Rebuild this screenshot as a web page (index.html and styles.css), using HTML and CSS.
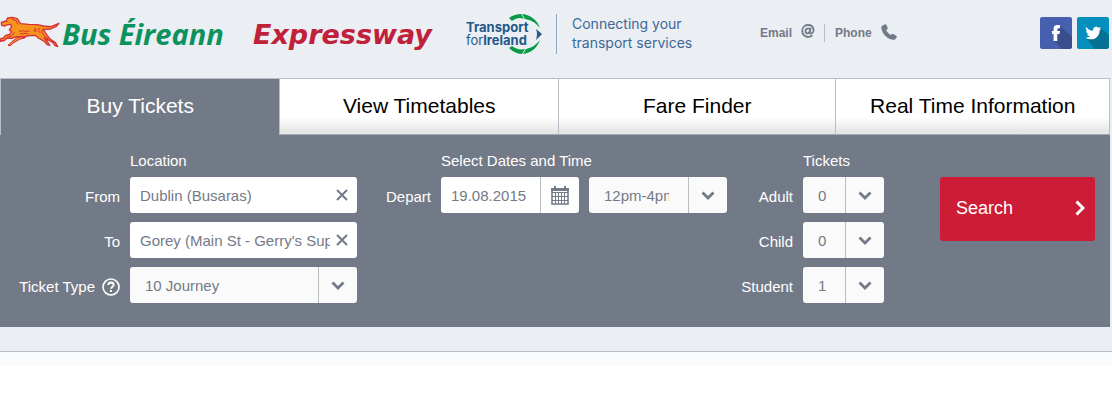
FILE: index.html
```html
<!DOCTYPE html>
<html lang="en">
<head>
<meta charset="utf-8">
<title>Bus Éireann - Buy Tickets</title>
<link rel="stylesheet" href="styles.css">
</head>
<body>
<svg class="sprite" aria-hidden="true">
  <symbol id="chevron" viewBox="0 0 14 9"><path d="M1.500 1.500 7 7l5.500-5.500" fill="none" stroke="currentColor" stroke-width="2.800"/></symbol>
  <symbol id="cross" viewBox="0 0 12 12"><path d="M1 1l10 10M11 1 1 11" fill="none" stroke="currentColor" stroke-width="2"/></symbol>
</svg>
<div class="page">
  <header class="header">
    <a class="brand" href="#" aria-label="Bus Éireann">
      <svg class="dog" viewBox="0 0 180 100" aria-hidden="true">
        <path d="M4 18 18 14 23 5 37 3 52 7 58 17 62 22 86 24 112 25 130 29 153 31 177 21 169 30 152 38 130 39 136 49 142 58 150 68 166 79 173 91 165 88 158 78 139 68 133 64 143 77 149 87 141 85 133 75 115 65 106 57 88 58 70 62 50 61 36 66 21 66 12 73 1 75 0 68 10 65 17 57 29 54 35 46 28 41 35 31 32 24 23 25 15 29 5 27Z" fill="#f7941e" stroke="#d8303a" stroke-width="4" stroke-linejoin="round"/>
        <path d="M62 61 52 64 36 76 24 87 31 88 40 80 58 69 76 64Z" fill="#f7941e" stroke="#d0203a" stroke-width="3"/>
        <path d="M36 9 49 13 53 24M57 43l7 2 7-2 8 3 10-3M60 52l8 1 8-2 9 2M103 36l6 3-8 4 9 2M119 34l-4 9 6 7M128 38l-3 9 8 12 12 9M44 48 35 59 20 62M1 74l11-2 9-6 15 0M150 68l15 11 8 12M133 66l16 21" fill="none" stroke="#d8303a" stroke-width="3"/>
        <circle cx="21" cy="15" r="2" fill="#d0203a"/>
      </svg>
      <span class="brand-name">Bus Éireann</span>
    </a>
    <a class="expressway" href="#">Expressway</a>
    <a class="tfi" href="#">
      <svg class="tfi-ring" viewBox="0 0 34 40" aria-hidden="true">
        <path d="M1 4C5 1 9 0 13 0l3 5C12 3 8 4 4 7ZM14 0c9 1 15 6 18 14C27 8 23 6 17 5ZM1 34c4 4 9 6 13 6l3-5c-5 1-9 0-13-3ZM15 40c8-1 14-6 17-14-5 6-9 8-14 9Z" fill="#079b48"/>
        <path d="M28 15 34 20 28 26Q30 20 28 15Z" fill="#25588a"/>
      </svg>
      <span class="tfi-name"><b>Transport</b><span>for<b>Ireland</b></span></span>
    </a>
    <p class="tagline">Connecting your<br>transport services</p>
    <nav class="contact" aria-label="Contact">
      <a href="#">Email
        <svg width="14" height="14" viewBox="0 0 14 14" aria-hidden="true"><path d="M9.600 3.800 8.900 8q-.2 1.800 1.100 1.600C12 9.200 12.800 7 12.500 5.200 12 2.700 9.700 1 7 1 3.500 1 1.200 3.700 1.200 7S3.600 13 7 13q2.700 0 4.500-1.600M9 6C9 4.700 8 4.200 7 4.300 5.300 4.500 4.400 6 4.500 7.600c.1 1.300 1 2 2.100 1.800C8 9.100 9 7.600 9 6Z" fill="none" stroke="currentColor" stroke-width="1.800"/></svg>
      </a>
      <a href="#">Phone
        <svg width="16" height="16" viewBox="0 0 16 16" aria-hidden="true"><path d="M1 2 4 .3Q5 0 5.500 1l1.200 3q.2.8-.5 1.300l-1 .7c.8 2 2.500 3.800 4.700 5l1.200-1q.6-.5 1.300-.1l3 2q.8.6.3 1.300l-1.500 2q-.4.500-1.200.6C6.500 15.500.5 9.500.3 3.200Q.3 2.400 1 2Z" fill="currentColor"/></svg>
      </a>
    </nav>
    <div class="social">
      <a href="#" aria-label="Facebook"><svg viewBox="0 0 32 32"><rect width="32" height="32" rx="2" fill="#465fae"/><path d="M20 9 32 20v10l-2 2H22l-8-8Z" fill="#394d8c"/><path d="M20 8v3.300h-1.700q-1 0-1 1v1.600H20l-.4 3.200h-2.300V24h-3.700v-6.900H12v-3.200h1.600v-2.200q0-3.700 3.700-3.700Z" fill="#fff"/></svg></a>
      <a href="#" aria-label="Twitter"><svg viewBox="0 0 32 32"><rect width="32" height="32" rx="2" fill="#058fbc"/><path d="M24 11 32 18v12l-2 2H18l-8-10Z" fill="#047195"/><path d="M9 10q3 3.500 7 3.700c-.5-3.200 3.300-5.200 5.600-2.900l2.200-.8-1.300 1.900 1.900-.5-1.800 2c.1 5.300-4 9-8.800 8.800q-3 0-5.300-1.500 2.800.2 4.700-1.400-2.500-.3-3.100-2.400h1.500q-2.500-.9-2.600-3.500l1.500.5Q8 12.200 9 10Z" fill="#fff"/></svg></a>
    </div>
  </header>

  <main class="booking">
    <nav class="tabs" aria-label="Services">
      <a class="tab active" href="#" aria-current="page">Buy Tickets</a>
      <a class="tab" href="#">View Timetables</a>
      <a class="tab" href="#">Fare Finder</a>
      <a class="tab" href="#">Real Time Information</a>
    </nav>
    <form class="panel">
      <div class="group location">
        <h2>Location</h2>
        <label for="from">From</label>
        <div class="field"><input id="from" type="text" value="Dublin (Busaras)"><button class="clear" type="button" aria-label="Clear from"><svg width="12" height="12"><use href="#cross"/></svg></button></div>
        <label for="to">To</label>
        <div class="field"><input id="to" type="text" value="Gorey (Main St - Gerry's Supermarket)"><button class="clear" type="button" aria-label="Clear to"><svg width="12" height="12"><use href="#cross"/></svg></button></div>
        <label for="type">Ticket Type
          <svg class="help" width="18" height="18" viewBox="0 0 18 18" aria-hidden="true"><circle cx="9" cy="9" r="8" fill="none" stroke="#fff" stroke-width="1.600"/><path d="M6.300 7q.2-2.500 2.800-2.500 2.500.1 2.600 2.300c0 1.800-2.600 1.900-2.600 4" fill="none" stroke="#fff" stroke-width="1.900"/><path d="M8 12h2v2H8z" fill="#fff"/></svg>
        </label>
        <div class="select"><select id="type"><option>10 Journey</option></select><span class="arrow"><svg width="14" height="9"><use href="#chevron"/></svg></span></div>
      </div>
      <div class="group dates">
        <h2>Select Dates and Time</h2>
        <label for="date">Depart</label>
        <div class="field date"><input id="date" type="text" value="19.08.2015"><button class="calendar" type="button" aria-label="Choose date"><svg width="18" height="19" viewBox="0 0 18 19"><path d="M0 2h18v3H0zM3 0h2v3H3zM13 0h2v3h-2z" fill="#737a87"/><path d="M1 4v14h16V4" fill="none" stroke="#737a87" stroke-width="1.600"/><path d="M4.500 6v12M7.500 6v12M10.500 6v12M13.500 6v12M1 6.500h16M1 10.500h16M1 14.500h16" stroke="#737a87"/></svg></button></div>
        <div class="select time"><select aria-label="Departure time"><option>12pm-4pm</option></select><span class="arrow"><svg width="14" height="9"><use href="#chevron"/></svg></span></div>
      </div>
      <div class="group tickets">
        <h2>Tickets</h2>
        <label for="adult">Adult</label>
        <div class="select"><select id="adult"><option>0</option><option>1</option></select><span class="arrow"><svg width="14" height="9"><use href="#chevron"/></svg></span></div>
        <label for="child">Child</label>
        <div class="select"><select id="child"><option>0</option><option>1</option></select><span class="arrow"><svg width="14" height="9"><use href="#chevron"/></svg></span></div>
        <label for="student">Student</label>
        <div class="select"><select id="student"><option>1</option><option>0</option></select><span class="arrow"><svg width="14" height="9"><use href="#chevron"/></svg></span></div>
      </div>
      <button class="search" type="submit">Search
        <svg width="10" height="16" viewBox="0 0 10 16" aria-hidden="true"><path d="M1.500 1.500 8 8l-6.500 6.500" fill="none" stroke="#fff" stroke-width="3"/></svg>
      </button>
    </form>
  </main>
</div>
<div class="strip"></div>
</body>
</html>
```
FILE: styles.css
```css
* { box-sizing: border-box; }

body {
  margin: 0;
  background: #fff;
  color: #fff;
  font: 15px/16px "Liberation Sans", Arial, sans-serif;
}

a { color: inherit; text-decoration: none; }
svg { display: block; flex: none; }
input, select, button { font: inherit; border: 0; margin: 0; padding: 0; }
button { cursor: pointer; }
.sprite { position: absolute; width: 0; height: 0; }

.page {
  background: #ebeef3;
  border-bottom: 1px solid #b8bec6;
  padding: 0 2px 24px 0;
}
.strip { height: 14px; background: #fafbfd; }

/* Header */
.header { display: flex; align-items: flex-start; height: 78px; padding-top: 14px; }
.brand { display: flex; width: 253px; }
.dog { width: 60px; height: 34px; margin-top: 2px; }
.brand-name {
  padding-left: 2px;
  color: #0a925f;
  font: italic bold 29px/40px "Open Sans", sans-serif;
  white-space: nowrap;
}
.expressway {
  width: 213px;
  color: #c0203a;
  font: italic bold 27px/42px "DejaVu Sans", sans-serif;
}
.tfi { display: grid; width: 90px; height: 40px; color: #25588a; }
.tfi > * { grid-area: 1 / 1; }
.tfi-ring { width: 34px; height: 40px; margin-left: 42px; }
.tfi-name { display: flex; flex-direction: column; padding-top: 7px; font: 13px/13px Inter, sans-serif; z-index: 1; }
.tfi-name b { font-weight: 700; }
.tagline {
  width: 204px;
  margin: 0;
  padding: 0 0 2px 15px;
  border-left: 1px solid #8fa9c3;
  color: #3c6995;
  font: 14px/19px Inter, sans-serif;
}
.contact { display: flex; padding-top: 10px; color: #737a87; font-size: 12px; font-weight: bold; }
.contact a { display: flex; gap: 9px; line-height: 18px; }
.contact a + a { margin-left: 9px; padding-left: 10px; border-left: 1px solid #b8bec6; }
.social { display: flex; gap: 5px; margin-left: auto; padding: 3px 1px 0 0; }
.social svg { width: 32px; height: 32px; }

/* Tabs */
.tabs {
  display: grid;
  grid-template-columns: 279fr 279fr 278fr 274fr;
  border: 1px solid #b8bec6;
  border-bottom: 0;
}
.tab {
  padding: 14px 0 16px;
  border-bottom: 1px solid #a4aab3;
  background: linear-gradient(#fff 70%, #e6e6e5 94%);
  color: #000;
  font-size: 21px;
  line-height: 25px;
  text-align: center;
}
.tab + .tab { border-left: 1px solid #b8bec6; }
.tab.active { background: #737a87; border-bottom-color: #737a87; color: #fff; }

/* Booking form */
.panel {
  display: flex;
  align-items: flex-start;
  padding: 18px 15px 24px 0;
  background: #737a87;
}
.group { display: grid; gap: 9px 10px; }
.group h2 { grid-column: 2 / -1; margin: 0; font-size: 15px; font-weight: normal; line-height: 15px; }
.group label {
  display: flex;
  align-items: center;
  justify-content: flex-end;
  gap: 7px;
  padding-top: 3px;
  white-space: nowrap;
}
.location { flex: 1; grid-template-columns: 120px 1fr; }
.dates { margin-left: 30px; grid-template-columns: 44px 138px 138px; }
.tickets { margin-left: 16px; grid-template-columns: 50px 81px; }

.field, .select { display: flex; height: 36px; border-radius: 3px; overflow: hidden; color: #737a87; }
.field { background: #fff; }
.field input { flex: 1; min-width: 0; padding: 2px 0 0 10px; background: none; color: inherit; }
.field button { display: grid; place-items: center; background: none; color: #737a87; }
.field .clear { width: 27px; padding-right: 3px; }
.field .calendar { width: 39px; border-left: 1px solid #b8bec6; }
.select { position: relative; background: #fafafa; }
.select select {
  width: 100%;
  padding: 2px 40px 0 15px;
  appearance: none;
  background: none;
  color: inherit;
}
.time select { padding-right: 58px; }
.arrow {
  position: absolute;
  inset: 0 0 0 auto;
  display: grid;
  place-items: center;
  width: 39px;
  border-left: 1px solid #b8bec6;
  pointer-events: none;
}
.search {
  display: flex;
  align-items: center;
  justify-content: space-between;
  width: 155px;
  height: 64px;
  margin: 24px 0 0 56px;
  padding: 0 10px 2px 16px;
  border-radius: 3px;
  background: #cd1c36;
  color: #fff;
  font-size: 18px;
}
```
